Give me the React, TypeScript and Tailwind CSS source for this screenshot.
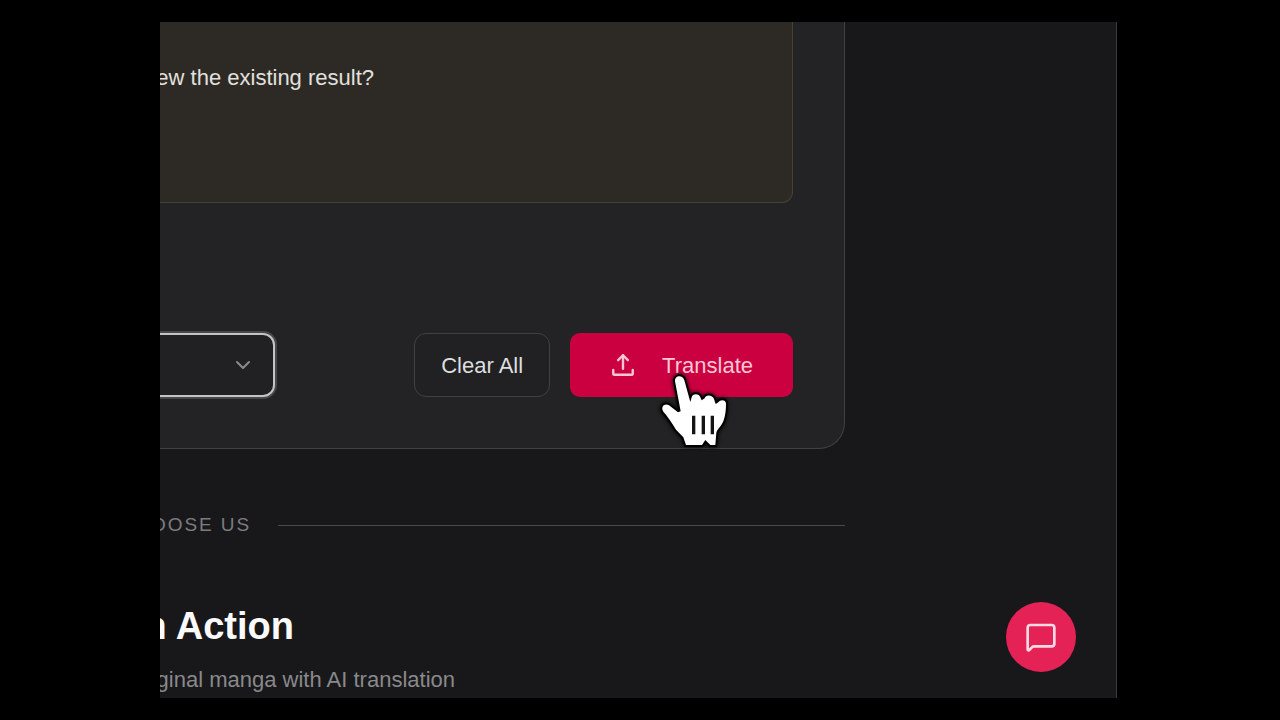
import { ChevronDown, MessageSquare } from "lucide-react";

function UploadIcon() {
  return (
    <svg
      className="size-[26px] shrink-0"
      viewBox="0 0 24 24"
      fill="none"
      stroke="currentColor"
      strokeWidth="2.2"
      strokeLinecap="round"
      strokeLinejoin="round"
      aria-hidden="true"
    >
      <path d="M21 16.5V20a1 1 0 0 1-1 1H4a1 1 0 0 1-1-1v-3.5" />
      <path d="M12 15.5V3" />
      <path d="m7.5 7.5 4.5-4.5 4.5 4.5" />
    </svg>
  );
}

function HandPointer() {
  return (
    <svg
      className="pointer-events-none absolute left-[490px] top-[338px] h-[100px] w-[90px] drop-shadow-[0_0_2px_#000]"
      viewBox="0 0 270 300"
      aria-hidden="true"
    >
      <path
        d="M75 64C74 45 98 44 103 61L121 126L125 112C127 99 148 100 151 112L155 121L164 115C167 103 188 104 192 117L197 132L205 127C210 118 228 118 228 131C228 151 226 166 221 181C216 197 203 206 199 218L196 255L181 255L166 240L156 255L108 255L100 232L78 209C68 192 54 172 39 154C32 139 44 129 57 136L84 157L92 154Z"
        fill="#fff"
        stroke="#000"
        strokeWidth="12"
        strokeLinejoin="round"
        paintOrder="stroke"
      />
      <path d="M131 167V223M160 167V223M187 167V223" stroke="#141414" strokeWidth="10" />
    </svg>
  );
}

function Notice() {
  return (
    <div className="mr-[51px] overflow-hidden rounded-br-[11px] border-b border-r border-[#4a4230] bg-[#2d2a25] pb-[108px] pt-10">
      <p className="flex w-[214px] justify-end whitespace-nowrap text-[22px] leading-8 text-[#e2e1df]">
        ew the existing result?
      </p>
    </div>
  );
}

function Toolbar() {
  return (
    <div className="mr-[51px] mt-[130px] flex items-center justify-between">
      <div className="relative w-[115px]">
        <select
          aria-label="Language"
          className="block h-16 w-full appearance-none rounded-r-[12px] border-y-2 border-r-2 border-[#c4c4c6] bg-[#212123] shadow-[0_0_0_2px_#48484b] outline-none"
        />
        <ChevronDown
          className="pointer-events-none absolute right-5 top-5 size-6 text-[#8b8b8e]"
          aria-hidden="true"
        />
      </div>
      <div className="flex gap-5">
        <button
          type="button"
          className="h-16 rounded-[12px] border border-[#414144] bg-[#212123] px-[26px] text-[22px] text-[#dededf]"
        >
          Clear All
        </button>
        <button
          type="button"
          className="flex h-16 items-center gap-[26px] rounded-[10px] bg-[#cb0040] px-10 text-[22px] text-[#fbc6d5]"
        >
          <UploadIcon />
          Translate
        </button>
      </div>
    </div>
  );
}

export default function App() {
  return (
    <div className="flex min-h-screen bg-black py-[22px] pl-[160px] pr-[163px] font-['Liberation_Sans',Arial,sans-serif]">
      <main className="relative flex-1 overflow-hidden border-r border-[#3a3a3c] bg-[#18181a] pr-[271px]">
        <section className="rounded-br-[26px] border-b border-r border-[#414144] bg-[#232325] pb-[51px]">
          <Notice />
          <Toolbar />
        </section>

        <div className="mt-[62px] flex items-center gap-[27px]">
          <p className="flex w-[91px] shrink-0 justify-end whitespace-nowrap text-[19px] leading-7 tracking-widest text-[#7c7c7f]">
            OOSE US
          </p>
          <div className="h-px flex-1 bg-[#4a4a4d]" />
        </div>

        <section>
          <h2 className="mt-[63px] flex w-[134px] justify-end whitespace-pre text-[38px] font-bold leading-[48px] text-[#fafafa]">
            n Action
          </h2>
          <p className="mt-[14px] flex w-[295px] justify-end whitespace-nowrap text-[22px] leading-8 text-[#89898c]">
            ginal manga with AI translation
          </p>
        </section>

        <button
          type="button"
          aria-label="Open chat"
          className="absolute bottom-[26px] right-10 flex size-[70px] items-center justify-center rounded-full bg-[#e52256] text-[#ffd9e3]"
        >
          <MessageSquare className="size-8" aria-hidden="true" />
        </button>
        <HandPointer />
      </main>
    </div>
  );
}
